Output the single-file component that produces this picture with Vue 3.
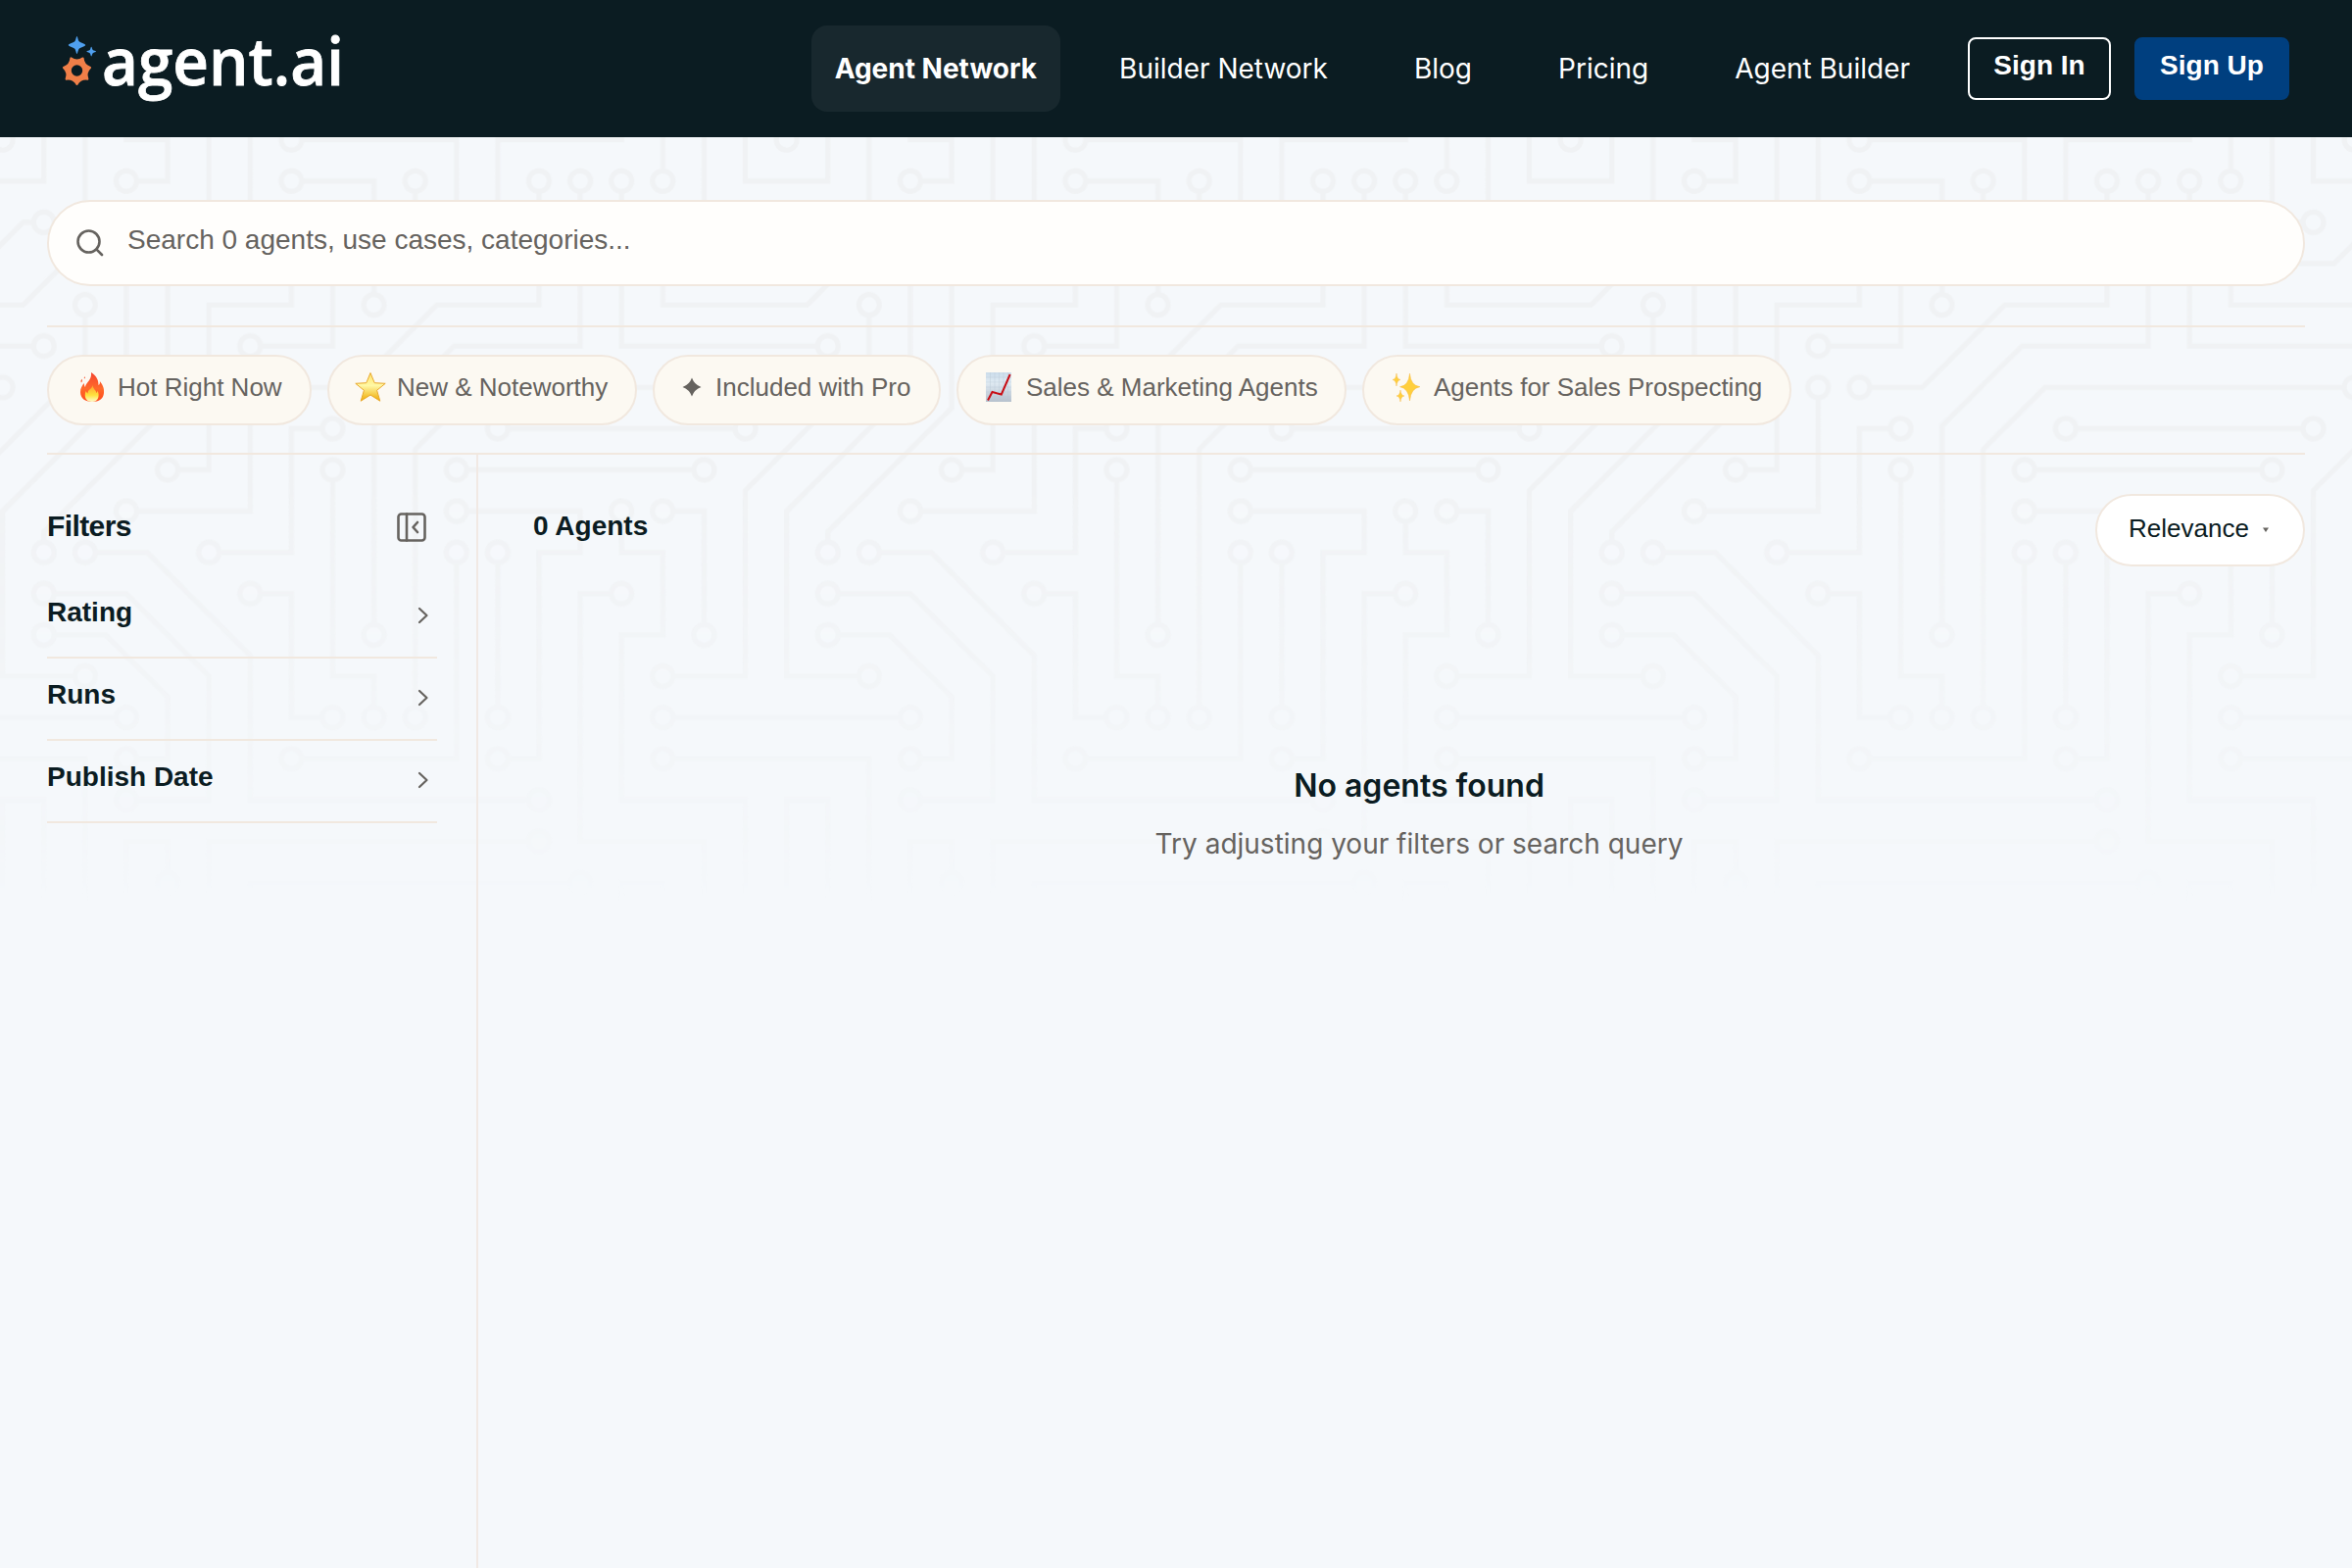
<template>
  <div class="page">
    <header class="topbar">
      <svg class="logo" width="290" height="90" viewBox="0 0 290 90">
        <path
          class="logo-spark"
          d="M18.500 12c.6 0 .9 3 2 5 .8 1.300 6.700 2.700 6.700 4s-5.900 2.700-6.700 4c-1.100 2-1.400 5-2 5s-.9-3-2-5c-.8-1.300-6.700-2.700-6.700-4s5.900-2.700 6.700-4c1.100-2 1.400-5 2-5zM33.200 22.800c.6 0 .7 2.200 1.500 3.200.8.700 3.400.9 3.400 1.600s-2.600.9-3.400 1.600c-.8 1-.9 3.200-1.500 3.200s-.7-2.200-1.500-3.200c-.8-.7-3.400-.9-3.400-1.600s2.600-.9 3.400-1.600c.8-1 .9-3.200 1.500-3.200z"
        />
        <path
          class="logo-gear"
          d="M18.500 61Q22.200 54.700 29.400 55.700 26.800 48.900 32.100 43.900 25.100 41.700 24.600 34.400 18.500 38.500 12.400 34.400 11.900 41.700 4.900 43.900 10.200 48.900 7.600 55.700 14.800 54.700 18.500 61zM18.500 40.300a6.700 6.700 0 1 0 0 13.400 6.700 6.700 0 0 0 0-13.400z"
        />
        <text class="logo-text" x="44" y="62" textLength="247" lengthAdjust="spacingAndGlyphs">agent.ai</text>
      </svg>
      <nav class="nav">
        <a v-for="item in navItems" :key="item" class="nav-link" :class="{ active: item === activeItem }">{{ item }}</a>
      </nav>
      <div class="auth">
        <button class="btn btn-outline">Sign In</button>
        <button class="btn btn-primary">Sign Up</button>
      </div>
    </header>

    <main class="content">
      <svg class="circuit" width="2400" height="780">
        <defs>
          <pattern id="board" width="304" height="304" patternUnits="userSpaceOnUse" patternTransform="scale(2.63158)">
            <path class="trace" :d="boardPath" />
            <circle v-for="[x, y] in nodes" :key="`${x}-${y}`" class="node" :cx="x" :cy="y" r="3" />
          </pattern>
        </defs>
        <rect width="2400" height="780" fill="url(#board)" />
      </svg>

      <div class="search">
        <svg class="search-icon" width="32" height="32" viewBox="0 0 32 32">
          <circle cx="14.500" cy="14.500" r="11" />
          <path d="m22.600 22.600 5.400 5.400" />
        </svg>
        <span>Search 0 agents, use cases, categories...</span>
      </div>

      <div class="chips">
        <button v-for="chip in chips" :key="chip.label" class="chip" :class="chip.icon">
          <svg v-if="chip.icon === 'fire'" class="chip-icon" width="28" height="32" viewBox="0 0 28 32">
            <defs>
              <linearGradient id="flame" x1="0" y1="0" x2="0" y2="1">
                <stop offset="0" stop-color="#f4452f" />
                <stop offset=".55" stop-color="#ff6a2b" />
                <stop offset="1" stop-color="#ff4a1c" />
              </linearGradient>
              <linearGradient id="flame-core" x1="0" y1="0" x2="0" y2="1">
                <stop offset="0" stop-color="#ff9d2e" />
                <stop offset=".6" stop-color="#ffe23f" />
                <stop offset="1" stop-color="#fffbd0" />
              </linearGradient>
            </defs>
            <path fill="url(#flame)" d="M13 1c6 4 7.500 8 7.500 13 1.500-1 1.600-2.500 1.400-4 3 4 4.600 7 4.100 12-.5 6-5 9-12 9S2 27.500 2 21c0-4 1.700-6 3.700-9 .4 2 .3 3 1.300 4C7.500 11 14 9 13 1zM3 11.500c-.9-1.500-.5-2.500.5-3.700.7 1.500.7 2.600-.5 3.700zM6 7.500c-.5-1 0-1.700.7-2.200.5 1 .3 1.700-.7 2.200z" />
            <path fill="url(#flame-core)" d="M14.500 14c.5 4 3.500 5 4 8 .8-.8.9-1.500 1-2.500 2.500 5 1 11.500-5.500 11.500S5.500 26 7.500 20c.8 1 1 1.800 2 2.500-.2-4 4.500-4.500 5-8.500z" />
          </svg>
          <svg v-else-if="chip.icon === 'star'" class="chip-icon" width="32" height="32" viewBox="0 0 32 32">
            <defs>
              <linearGradient id="gold" x1="0" y1="0" x2="0" y2="1">
                <stop offset="0" stop-color="#ffe36b" />
                <stop offset=".45" stop-color="#fff8a5" />
                <stop offset="1" stop-color="#efa900" />
              </linearGradient>
            </defs>
            <path fill="url(#gold)" stroke="#e9a82c" stroke-linejoin="round" d="m16 1.500 4.200 10.200 11 .6-8.600 7 3.200 10.900-9.800-6.200-9.800 6.200 3.200-10.900-8.600-7 11-.6z" />
          </svg>
          <svg v-else-if="chip.icon === 'plus'" class="chip-icon" width="20" height="20" viewBox="0 0 20 20">
            <path fill="#66635f" d="M10 .5Q12.500 7.500 19.500 10 12.500 12.500 10 19.500 7.500 12.500 .5 10 7.500 7.500 10 .5z" />
          </svg>
          <svg v-else-if="chip.icon === 'chart'" class="chip-icon" width="26" height="30" viewBox="0 0 26 30">
            <defs>
              <linearGradient id="paper" x1="0" y1="0" x2="0" y2="1">
                <stop offset="0" stop-color="#cbdcea" />
                <stop offset=".35" stop-color="#e0ebf3" />
                <stop offset="1" stop-color="#b6c1cd" />
              </linearGradient>
            </defs>
            <path fill="url(#paper)" d="M0 0h26v30H0z" />
            <path fill="none" stroke="#b8c8d5" stroke-width=".4" d="M4.500 0v30M9 0v30M13.500 0v30M18 0v30M22.500 0v30M0 5h26M0 10h26M0 15h26M0 20h26M0 25h26" />
            <path fill="none" stroke="#c80f16" stroke-width="2" d="M2 28.500 6.500 20l9.300 2.500L24.700 2" />
          </svg>
          <svg v-else class="chip-icon" width="30" height="32" viewBox="0 0 30 32">
            <path fill="#ffcf3d" stroke="#f5b33f" stroke-width=".4" d="M18.500 2q1.100 12.600 10.500 13.700-9.400 1.500-10.500 14.300-1.100-12.800-10-14.300Q17.400 14.600 18.500 2zM5 2q.5 6 4 6.500-3.500.5-4 6.500-.5-6-4-6.500 3.500-.5 4-6.500zM9 19q.5 5.500 4 6-3.500.5-4 6-.5-5.500-4-6 3.500-.5 4-6z" />
          </svg>
          <span>{{ chip.label }}</span>
        </button>
      </div>

      <div class="body">
        <aside class="filters">
          <div class="filters-head">
            <h2>Filters</h2>
            <svg class="panel-icon" width="32" height="32" viewBox="0 0 32 32">
              <rect x="2.500" y="2.500" width="27" height="27" rx="3" />
              <path d="M11 2.500v27M22 11l-4.500 5 4.500 5" />
            </svg>
          </div>
          <div v-for="filter in filters" :key="filter" class="filter-row">
            <span>{{ filter }}</span>
            <svg class="chevron" width="12" height="20" viewBox="0 0 12 20">
              <path d="m2 3 7.500 7L2 17" />
            </svg>
          </div>
        </aside>

        <section class="results">
          <div class="results-head">
            <h2>0 Agents</h2>
            <button class="sort">
              <span>Relevance</span>
              <svg width="8" height="6" viewBox="0 0 8 6"><path fill="#66635f" d="M1 .5h6L4 5z" /></svg>
            </button>
          </div>
          <div class="empty">
            <h3>No agents found</h3>
            <p>Try adjusting your filters or search query</p>
          </div>
        </section>
      </div>
    </main>
  </div>
</template>

<script setup>
const navItems = ['Agent Network', 'Builder Network', 'Blog', 'Pricing', 'Agent Builder']
const activeItem = 'Agent Network'

const chips = [
  { icon: 'fire', label: 'Hot Right Now' },
  { icon: 'star', label: 'New & Noteworthy' },
  { icon: 'plus', label: 'Included with Pro' },
  { icon: 'chart', label: 'Sales & Marketing Agents' },
  { icon: 'sparkles', label: 'Agents for Sales Prospecting' }
]

const filters = ['Rating', 'Runs', 'Publish Date']

// circuit board tile, 304 x 304 on a 16 unit grid
const boardPath = [
  'M44.1 224a5 5 0 1 1 0 2H0v-2h44.1zm160 48a5 5 0 1 1 0 2H82v-2h122.1zm57.8-46a5 5 0 1 1 0-2H304v2h-42.1zm0 16a5 5 0 1 1 0-2H304v2h-42.1zm6.2-114a5 5 0 1 1 0 2h-86.2a5 5 0 1 1 0-2h86.2zm-256-48a5 5 0 1 1 0 2H0v-2h12.1zm185.8 34a5 5 0 1 1 0-2h86.2a5 5 0 1 1 0 2h-86.2z',
  'M258 12.1a5 5 0 1 1-2 0V0h2v12.1zm-64 208a5 5 0 1 1-2 0v-54.2a5 5 0 1 1 2 0v54.2zm48-198.2V80h62v2h-64V21.9a5 5 0 1 1 2 0zm16 16V64h46v2h-48V37.9a5 5 0 1 1 2 0zm-128 96V208h16v12.1a5 5 0 1 1-2 0V210h-16v-76.1a5 5 0 1 1 2 0zm-5.9-21.9a5 5 0 1 1 0 2H114v48H85.9a5 5 0 1 1 0-2H112v-48h12.1zm-6.2 130a5 5 0 1 1 0-2H176v-74.1a5 5 0 1 1 2 0V242h-60.1zm-16-64a5 5 0 1 1 0-2H114v48h10.1a5 5 0 1 1 0 2H112v-48h-10.1z',
  'M66 284.1a5 5 0 1 1-2 0V274H50v30h-2v-32h18v12.1zM236.1 176a5 5 0 1 1 0 2H226v94h48v32h-2v-30h-48v-98h12.1zm25.8-30a5 5 0 1 1 0-2H274v44.1a5 5 0 1 1-2 0V146h-10.1zm-64 96a5 5 0 1 1 0-2H208v-80h16v-14h-42.1a5 5 0 1 1 0-2H226v18h-16v80h-12.1zm86.2-210a5 5 0 1 1 0 2H272V0h2v32h10.1z',
  'M98 101.9V146H53.9a5 5 0 1 1 0-2H96v-42.1a5 5 0 1 1 2 0zM53.9 34a5 5 0 1 1 0-2H80V0h2v34H53.9zm60.1 3.9V66H82v64H69.9a5 5 0 1 1 0-2H80V64h32V37.9a5 5 0 1 1 2 0zM101.9 82a5 5 0 1 1 0-2H128V37.9a5 5 0 1 1 2 0V82h-28.1zm16-64a5 5 0 1 1 0-2H146v44.1a5 5 0 1 1-2 0V18h-26.1zm102.2 270a5 5 0 1 1 0 2H98v14h-2v-16h124.1z',
  'M242 149.9V160h16v34h-16v62h48v48h-2v-46h-48v-66h16v-30h-16v-12.1a5 5 0 1 1 2 0zM53.9 18a5 5 0 1 1 0-2H64V2H48V0h18v18H53.9zm112 32a5 5 0 1 1 0-2H192V0h50v2h-48v48h-28.1zm-48-48a5 5 0 0 1-9.8-2h2.07a3 3 0 1 0 5.66 0H178v34h-18V21.9a5 5 0 1 1 2 0V32h14V2h-58.1zm0 96a5 5 0 1 1 0-2H137l32-32h39V21.9a5 5 0 1 1 2 0V66h-40.17l-32 32H117.9z',
  'M146 188.1a5 5 0 1 1-2 0v-76.51L175.59 80H224V21.9a5 5 0 1 1 2 0V82h-49.59L146 112.41v75.69zm16 32a5 5 0 1 1-2 0v-99.51L184.59 96H300.1a5 5 0 0 1 3.9-3.9v2.07a3 3 0 0 0 0 5.66v2.07a5 5 0 0 1-3.9-3.9H185.41L162 121.41v98.69zm-144-64a5 5 0 1 1-2 0v-3.51l48-48V48h32V0h2v50H66v55.41l-48 48v2.69z',
  'M50 53.9v43.51l-48 48V208h26.1a5 5 0 1 1 0 2H0v-65.41l48-48V53.9a5 5 0 1 1 2 0zm-16 16V89.41l-34 34v-2.82l32-32V69.9a5 5 0 1 1 2 0zM12.1 32a5 5 0 1 1 0 2H9.41L0 43.41V40.6L8.59 32h3.51zm265.8 18a5 5 0 1 1 0-2h18.69l7.41-7.41v2.82L297.41 50H277.9zm-16 160a5 5 0 1 1 0-2H288v-71.41l16-16v2.82l-14 14V210h-28.1z',
  'M53.9 242a5 5 0 1 1 0-2H64v-22.59L40.59 194H21.9a5 5 0 1 1 0-2H41.41L66 216.59V242H53.9zm150.2 14a5 5 0 1 1 0 2H96v-56.6L56.6 162H37.9a5 5 0 1 1 0-2h19.5L98 200.6V256h106.1zm-150.2 2a5 5 0 1 1 0-2H80v-46.59L48.59 178H21.9a5 5 0 1 1 0-2H49.41L82 208.59V258H53.9z',
  'M34 39.8v1.61L9.41 66H0v-2h8.59L32 40.59V0h2v39.8zM2 300.1a5 5 0 0 1 3.9 3.9H3.83A3 3 0 0 0 0 302.17V256h18v48h-2v-46H2v42.1zM34 241v63h-2v-62H0v-2h34v1zM17 18H0v-2h16V0h2v18h-1zm273-2h14v2h-16V0h2v16zm-32 273v15h-2v-14h-14v14h-2v-16h18v1zM0 92.1A5.02 5.02 0 0 1 6 97a5 5 0 0 1-6 4.9v-2.07a3 3 0 1 0 0-5.66V92.1z',
  'M80 272h2v32h-2v-32zm37.9 32h-2.07a3 3 0 0 0-5.66 0h-2.07a5 5 0 0 1 9.8 0zM5.9 0A5.02 5.02 0 0 1 0 5.9V3.83A3 3 0 0 0 3.83 0H5.9zm294.2 0h2.07A3 3 0 0 0 304 3.83V5.9a5 5 0 0 1-3.9-5.9zm3.9 300.1v2.07a3 3 0 0 0-1.83 1.83h-2.07a5 5 0 0 1 3.9-3.9z'
].join('')

// centres of the ring shaped nodes
const nodes = [
  [49, 17], [113, 17], [161, 17], [209, 17], [225, 17], [241, 17], [257, 17],
  [17, 33], [49, 33], [113, 33], [129, 33], [257, 33], [289, 33],
  [49, 49], [161, 49], [273, 49], [33, 65], [145, 65], [17, 81], [97, 81],
  [97, 97], [113, 97], [129, 113], [193, 113], [289, 113],
  [65, 129], [129, 129], [177, 129], [273, 129],
  [49, 145], [177, 145], [241, 145], [257, 145],
  [17, 161], [33, 161], [81, 161], [177, 161], [193, 161],
  [17, 177], [97, 177], [241, 177], [17, 193], [145, 193], [273, 193],
  [33, 209], [257, 209], [49, 225], [129, 225], [145, 225], [161, 225], [193, 225], [257, 225],
  [49, 241], [113, 241], [193, 241], [257, 241],
  [49, 257], [209, 257], [209, 273], [65, 289], [225, 289]
]
</script>

<style>
body {
  margin: 0;
  background: #f5f8fb;
}
</style>

<style scoped>
.page {
  display: flex;
  flex-direction: column;
  width: 2400px;
  height: 1600px;
  overflow: hidden;
  background: #f5f8fb;
  color: #0b1c22;
  font-family: 'Liberation Sans', Arial, sans-serif;
}

button {
  box-sizing: border-box;
  font-family: inherit;
}

h2,
h3,
p {
  margin: 0;
}

.topbar {
  display: flex;
  align-items: center;
  box-sizing: border-box;
  flex: none;
  height: 140px;
  padding: 0 64px 0 60px;
  background: #0b1c22;
}

.logo {
  display: block;
  overflow: visible;
}

.logo-spark {
  fill: #4f9fee;
}

.logo-gear {
  fill: #f07f48;
  fill-rule: evenodd;
  stroke: #f07f48;
  stroke-linejoin: round;
  stroke-width: 2;
}

.logo-text {
  fill: #ffffff;
  stroke: #ffffff;
  stroke-width: 0.8;
  font-family: 'Open Sans', sans-serif;
  font-size: 67px;
  font-weight: 600;
}

.nav {
  display: flex;
  gap: 40px;
  margin-left: auto;
}

.nav-link {
  padding: 0 24px;
  border-radius: 16px;
  color: #ffffff;
  font-family: Inter, sans-serif;
  font-size: 28px;
  line-height: 88px;
  white-space: nowrap;
}

.nav-link.active {
  margin-right: -4px;
  background: #18282e;
  font-weight: 700;
}

.auth {
  display: flex;
  gap: 24px;
  margin-left: 35px;
}

.btn {
  height: 64px;
  padding: 0 0 6px;
  border: 2px solid #ffffff;
  border-radius: 8px;
  background: none;
  color: #ffffff;
  font-size: 28px;
  font-weight: 700;
}

.btn-outline {
  width: 146px;
}

.btn-primary {
  width: 158px;
  border-color: #003f7f;
  background: #003f7f;
}

.content {
  display: flex;
  flex: 1;
  flex-direction: column;
  position: relative;
  padding: 64px 48px 0;
}

.circuit {
  position: absolute;
  top: 0;
  left: 0;
  -webkit-mask-image: linear-gradient(#000 0, #000 45%, transparent 100%);
  mask-image: linear-gradient(#000 0, #000 45%, transparent 100%);
}

.trace {
  fill: #f0f2f4;
}

.node {
  fill: #f5f8fb;
}

.search,
.chips,
.body {
  position: relative;
}

.search {
  display: flex;
  align-items: center;
  box-sizing: border-box;
  height: 88px;
  padding-left: 26px;
  border: 2px solid #f1e8df;
  border-radius: 44px;
  background: #fffefc;
  color: #66635f;
  font-size: 28px;
}

.search span {
  margin: 0 0 6px 22px;
}

.search-icon,
.panel-icon,
.chevron {
  fill: none;
  stroke: #66635f;
  stroke-linecap: round;
  stroke-linejoin: round;
  stroke-width: 2.6;
}

.chevron {
  stroke-width: 2.2;
}

.chips {
  display: flex;
  gap: 16px;
  margin-top: 40px;
  padding: 28px 0;
  border-top: 2px solid #f1e8df;
  border-bottom: 2px solid #f1e8df;
}

.chip {
  display: flex;
  align-items: center;
  gap: 14px;
  height: 72px;
  padding: 0 0 6px 28px;
  border: 2px solid #f1e8df;
  border-radius: 36px;
  background: #fcf9f2;
  color: #66635f;
  font-size: 26px;
  white-space: nowrap;
}

.chip-icon {
  flex: none;
}

.chip.fire {
  gap: 12px;
  width: 270px;
  padding-left: 30px;
}

.chip.star {
  gap: 11px;
  width: 316px;
  padding-left: 26px;
}

.chip.plus {
  width: 294px;
}

.chip.chart {
  gap: 15px;
  width: 398px;
}

.chip.sparkles {
  gap: 13px;
  width: 438px;
}

.body {
  display: flex;
  flex: 1;
}

.filters {
  box-sizing: border-box;
  width: 440px;
  padding: 58px 40px 0 0;
  border-right: 2px solid #f1e9e4;
}

.filters-head {
  display: flex;
  align-items: center;
  justify-content: space-between;
  height: 32px;
  margin-bottom: 34px;
  padding-right: 10px;
}

.filters-head h2 {
  margin-bottom: 2px;
  font-size: 30px;
  letter-spacing: -0.6px;
}

.filter-row {
  display: flex;
  align-items: center;
  justify-content: space-between;
  box-sizing: border-box;
  height: 84px;
  padding: 0 8px 2px 0;
  border-bottom: 2px solid #f1e8df;
  font-size: 28px;
  font-weight: 700;
}

.filter-row span {
  margin-bottom: 6px;
}

.results {
  flex: 1;
  padding: 40px 0 0 56px;
}

.results-head {
  display: flex;
  align-items: flex-start;
  justify-content: space-between;
}

.results-head h2 {
  font-size: 28px;
  line-height: 65px;
}

.sort {
  display: flex;
  align-items: center;
  gap: 13px;
  width: 214px;
  height: 74px;
  padding: 0 0 4px 32px;
  border: 2px solid #f1e8df;
  border-radius: 37px;
  background: #ffffff;
  color: #0b1c22;
  font-size: 26px;
}

.sort svg {
  margin-top: 4px;
}

.empty {
  margin-top: 200px;
  font-family: Inter, sans-serif;
  text-align: center;
}

.empty h3 {
  font-size: 32px;
  font-weight: 600;
  line-height: 48px;
}

.empty p {
  margin-top: 14px;
  color: #66635f;
  font-size: 28px;
  line-height: 42px;
}
</style>
